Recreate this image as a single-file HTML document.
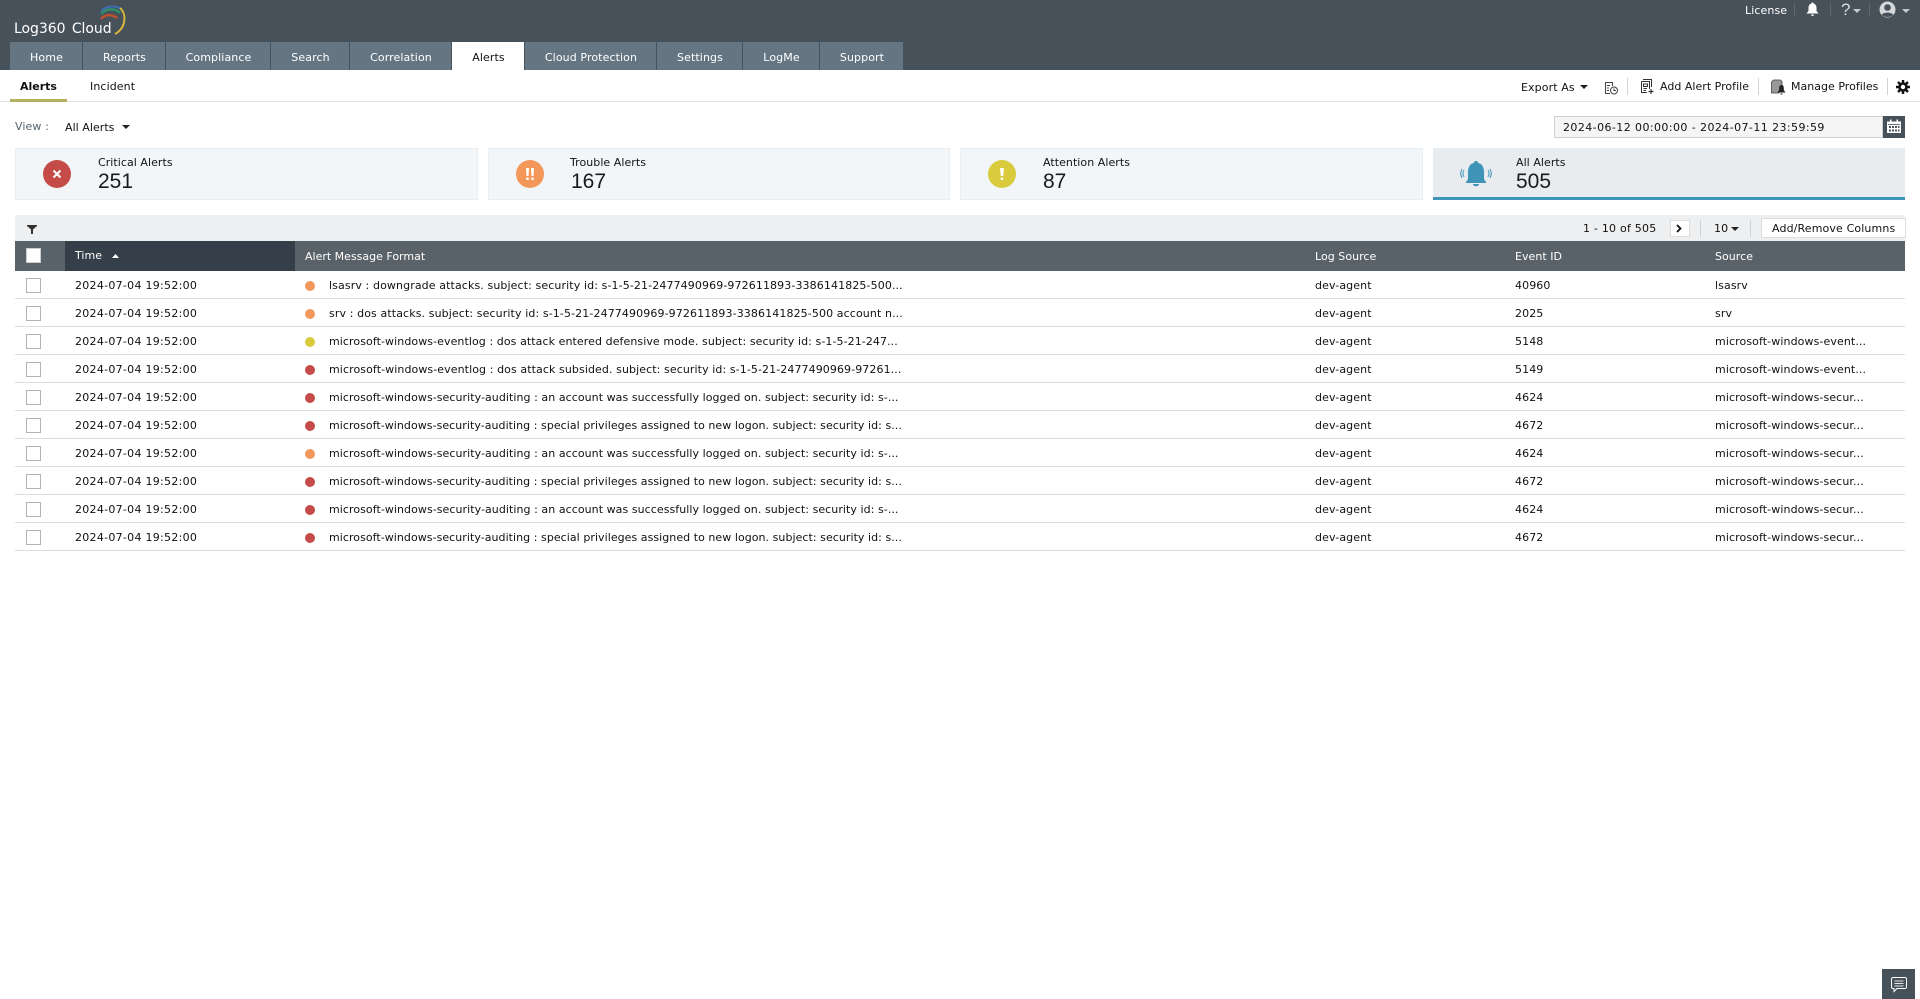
<!DOCTYPE html>
<html><head><meta charset="utf-8"><title>Log360 Cloud</title>
<style>
html,body{margin:0;padding:0;background:#fff}
body{width:1920px;height:999px;position:relative;overflow:hidden;font-family:"DejaVu Sans","Liberation Sans",sans-serif;font-size:11px;color:#111;letter-spacing:.1px}
.a{position:absolute;white-space:nowrap;line-height:16px;margin-top:1px}
.r .a{margin-top:2px}
.b{position:absolute}
.tab{position:absolute;top:42px;height:28px;background:#657582;color:#fff;text-align:center;line-height:32px;font-size:11px;box-sizing:border-box;padding-left:1px}
.card{position:absolute;top:148px;height:52px;background:#f3f6f9;box-sizing:border-box;border:1px solid #ebeef1}
.lbl{position:absolute;top:7px;font-size:11px;line-height:14px;white-space:nowrap;letter-spacing:.05px}
.num{position:absolute;top:21px;font-family:"Liberation Sans",sans-serif;font-size:21px;line-height:24px;letter-spacing:0;color:#1a1a1a}
.ic{position:absolute;top:11px;width:28px;height:28px;border-radius:50%;color:#fff;text-align:center}
.cb{position:absolute;left:26px;width:13px;height:13px;border:1px solid #b3b3b3;background:#fff}
.line{position:absolute;left:15px;width:1890px;height:1px;background:#dcdcdc}
.dot{position:absolute;left:305px;width:10px;height:10px;border-radius:50%}
.sep{position:absolute;width:1px;background:#d2d2d2}
.th{position:absolute;top:249px;color:#fff;line-height:16px;white-space:nowrap;letter-spacing:.04px}
.t{letter-spacing:.28px}
.k{letter-spacing:.06px}
.s{letter-spacing:.05px}
svg{position:absolute;display:block}
</style></head><body>

<div class="b" style="left:0;top:0;width:1920px;height:70px;background:#465159"></div>
<div class="a" style="left:14px;top:19px;font-size:14px;color:#fff;word-spacing:2px;letter-spacing:-.05px;line-height:18px">Log360 Cloud</div>
<svg style="left:98px;top:5px" width="32" height="32" viewBox="0 0 32 32" fill="none">
<path d="M3 6C8 1 18 0 23 4" stroke="#3f6cb0" stroke-width="2"/>
<path d="M3 9C9 3 17 3 22 8" stroke="#2f8f6a" stroke-width="2.5"/>
<path d="M3 14C7 9 14 9 19 13" stroke="#c0502f" stroke-width="2.5"/>
<path d="M22 3C29 9 28 23 17 29" stroke="#d9b83a" stroke-width="2"/>
</svg>

<div class="tab" style="left:10px;width:72px">Home</div>
<div class="tab" style="left:83px;width:82px">Reports</div>
<div class="tab" style="left:166px;width:104px">Compliance</div>
<div class="tab" style="left:271px;width:78px">Search</div>
<div class="tab" style="left:350px;width:101px">Correlation</div>
<div class="tab" style="left:452px;width:72px;background:#fff;color:#111">Alerts</div>
<div class="tab" style="left:525px;width:131px">Cloud Protection</div>
<div class="tab" style="left:657px;width:85px">Settings</div>
<div class="tab" style="left:743px;width:76px">LogMe</div>
<div class="tab" style="left:820px;width:83px">Support</div>

<div class="a" style="left:1745px;top:2px;color:#fff">License</div>
<div class="sep" style="left:1794px;top:3px;height:14px;background:#5d6870"></div>
<svg style="left:1805px;top:2px" width="15" height="15" viewBox="0 0 15 15"><path d="M7.500 0.500C8.300 .5 8.700 1 8.700 1.600C10.800 2.200 11.500 4 11.500 6V9L13.500 11.500H1.500L3.500 9V6C3.500 4 4.200 2.200 6.300 1.600C6.300 1 6.700 .5 7.500 .5ZM6 12.500H9C9 14.500 6 14.500 6 12.500Z" fill="#fff"/></svg>
<div class="sep" style="left:1830px;top:3px;height:14px;background:#5d6870"></div>
<div class="a" style="left:1841px;top:0;color:#d8dcdf;font-family:'Liberation Sans',sans-serif;font-size:17px;line-height:18px">?</div>
<svg style="left:1853px;top:9px" width="8" height="4"><path d="M0 0H8L4 4Z" fill="#c5cacd"/></svg>
<div class="sep" style="left:1869px;top:3px;height:14px;background:#5d6870"></div>
<svg style="left:1879px;top:1px" width="17" height="17" viewBox="0 0 17 17"><circle cx="8.500" cy="8.500" r="8" fill="#d4d8da"/><circle cx="8.500" cy="6.500" r="3.300" fill="#465159"/><path d="M2.800 14C4 10.800 13 10.800 14.200 14C11 16.700 6 16.700 2.800 14Z" fill="#465159"/></svg>
<svg style="left:1902px;top:9px" width="8" height="4"><path d="M0 0H8L4 4Z" fill="#c5cacd"/></svg>

<div class="a" style="left:20px;top:78px;font-weight:bold;color:#111;letter-spacing:0">Alerts</div>
<div class="a" style="left:90px;top:78px">Incident</div>
<div class="b" style="left:0;top:101px;width:1920px;height:1px;background:#e2e2e2"></div>
<div class="b" style="left:10px;top:99px;width:57px;height:3px;background:#b5b061"></div>

<div class="a" style="left:1521px;top:79px">Export As</div>
<svg style="left:1580px;top:85px" width="8" height="4"><path d="M0 0H8L4 4Z" fill="#222"/></svg>
<svg style="left:1604px;top:81px" width="15" height="14" viewBox="0 0 15 14" fill="none" stroke="#444" stroke-width="1"><path d="M6 12.500H1.500V1.500H8.500V5"/><path d="M3 4.500H6M3 7H5M3 9.500H5"/><circle cx="10" cy="9.500" r="3.500"/><path d="M10 7.500V9.500H12"/></svg>
<div class="sep" style="left:1627px;top:78px;height:17px"></div>
<svg style="left:1640px;top:79px" width="15" height="15" viewBox="0 0 15 15" fill="none" stroke="#333" stroke-width="1"><path d="M3.500 1V.5H11.500V8"/><path d="M1.500 2.500H9.500V10M7 13.500H1.500V2.500"/><path d="M3.500 5H7.500V7.500H3.500ZM3.500 9.500H7M3.500 11.500H6"/><path d="M11 10V15M8.500 12.500H13.500" stroke-width="1.200"/></svg>
<div class="a" style="left:1660px;top:78px;letter-spacing:.02px">Add Alert Profile</div>
<div class="sep" style="left:1758px;top:78px;height:17px"></div>
<svg style="left:1771px;top:79px" width="15" height="16" viewBox="0 0 15 16"><path d="M2.500 1H9.500L11 2.500V7L8 12V14H.5V3Z" fill="#999" stroke="#444" stroke-width=".8"/><path d="M10.500 6C12.300 6 12.800 7.500 12.800 9V11L14.500 13.500H6.500L8.200 11V9C8.200 7.500 8.700 6 10.500 6ZM9.300 14.500H11.700C11.700 16 9.300 16 9.300 14.500Z" fill="#222"/></svg>
<div class="a" style="left:1791px;top:78px;letter-spacing:.02px">Manage Profiles</div>
<div class="sep" style="left:1887px;top:78px;height:17px"></div>
<svg style="left:1896px;top:80px" width="14" height="14" viewBox="0 0 14 14"><circle cx="7" cy="7" r="3.500" fill="none" stroke="#111" stroke-width="2.600"/><g stroke="#111" stroke-width="2.400"><path d="M7 0V3M7 11V14M0 7H3M11 7H14M2 2L4 4M10 10L12 12M12 2L10 4M4 10L2 12"/></g></svg>

<div class="a" style="left:15px;top:118px;color:#56666f">View :</div>
<div class="a" style="left:65px;top:119px;letter-spacing:.04px">All Alerts</div>
<svg style="left:122px;top:125px" width="8" height="4"><path d="M0 0H8L4 4Z" fill="#222"/></svg>

<div class="b" style="left:1554px;top:116px;width:329px;height:22px;box-sizing:border-box;background:#f5f5f5;border:1px solid #d0d0d0"></div>
<div class="a" style="left:1563px;top:119px;letter-spacing:.42px">2024-06-12 00:00:00 - 2024-07-11 23:59:59</div>
<div class="b" style="left:1883px;top:116px;width:22px;height:22px;background:#465159"></div>
<svg style="left:1887px;top:119px" width="14" height="15" viewBox="0 0 14 15"><path d="M0 2.500H14V14H0Z" fill="#fff"/><path d="M3 .5H4.500V3.500H3ZM9.500 .5H11V3.500H9.500Z" fill="#fff"/><path d="M1 5H13V5.800H1Z" fill="#465159"/><g fill="#465159"><rect x="2" y="7" width="2" height="2"/><rect x="5" y="7" width="2" height="2"/><rect x="8" y="7" width="2" height="2"/><rect x="11" y="7" width="1.500" height="2"/><rect x="2" y="10.500" width="2" height="2"/><rect x="5" y="10.500" width="2" height="2"/><rect x="8" y="10.500" width="2" height="2"/><rect x="11" y="10.500" width="1.500" height="2"/></g></svg>

<div class="card" style="left:15px;width:463px">
 <div class="ic" style="left:27px;background:#c44b47"><svg style="left:8px;top:8px" width="12" height="12"><path d="M2.500 2.500L9.500 9.500M9.500 2.500L2.500 9.500" stroke="#fff" stroke-width="2"/></svg></div>
 <div class="lbl" style="left:82px">Critical Alerts</div><div class="num" style="left:82px">251</div>
</div>
<div class="card" style="left:488px;width:462px">
 <div class="ic" style="left:27px;background:#f3985a"><svg style="left:8px;top:7px" width="12" height="14"><path d="M2 1H5L4.500 9H2.500ZM7 1H10L9.500 9H7.500ZM2.300 10.500H4.700V13H2.300ZM7.300 10.500H9.700V13H7.300Z" fill="#fff"/></svg></div>
 <div class="lbl" style="left:81px">Trouble Alerts</div><div class="num" style="left:82px">167</div>
</div>
<div class="card" style="left:960px;width:463px">
 <div class="ic" style="left:27px;background:#d9cb3c"><svg style="left:10px;top:7px" width="8" height="14"><path d="M2 1H6L5.200 9H2.800ZM2.800 10.500H5.200V13H2.800Z" fill="#fff"/></svg></div>
 <div class="lbl" style="left:82px">Attention Alerts</div><div class="num" style="left:82px">87</div>
</div>
<div class="b" style="left:1433px;top:148px;width:472px;height:52px;background:#e9ecee;border-bottom:0"></div>
<div class="b" style="left:1433px;top:197px;width:472px;height:3px;background:#3f95b7"></div>
<svg style="left:1460px;top:159px" width="32" height="30" viewBox="0 0 32 30"><path d="M16 2C17.500 2 18 3 18 3.800C22.500 5 24 9 24 13V20L26.500 24H5.500L8 20V13C8 9 9.500 5 14 3.800C14 3 14.500 2 16 2ZM13 25H19C19 28 13 28 13 25Z" fill="#3f95b7"/><path d="M4 11C2.500 13 2.500 16 4 18M2 10C.2 13 .2 16 2 19M28 11C29.500 13 29.500 16 28 18M30 10C31.800 13 31.800 16 30 19" stroke="#3f95b7" fill="none"/></svg>
<div class="lbl" style="left:1516px;top:156px">All Alerts</div><div class="num" style="left:1516px;top:170px">505</div>

<div class="b" style="left:15px;top:215px;width:1890px;height:26px;background:#eeeff0"></div>
<svg style="left:27px;top:225px" width="10" height="9"><path d="M0 0H10V1L6 4.500V9H4V4.500L0 1Z" fill="#333"/></svg>
<div class="a" style="left:1583px;top:220px;letter-spacing:.22px">1 - 10 of 505</div>
<div class="b" style="left:1670px;top:220px;width:18px;height:15px;background:#fff;border:1px solid #ddd"></div>
<svg style="left:1676px;top:224px" width="6" height="9"><path d="M1 1L4.500 4.500L1 8" fill="none" stroke="#111" stroke-width="1.800"/></svg>
<div class="sep" style="left:1700px;top:220px;height:17px"></div>
<div class="a" style="left:1714px;top:220px">10</div>
<svg style="left:1731px;top:227px" width="8" height="4"><path d="M0 0H8L4 4Z" fill="#222"/></svg>
<div class="sep" style="left:1750px;top:220px;height:17px"></div>
<div class="b" style="left:1761px;top:218px;width:143px;height:18px;background:#fff;border:1px solid #ddd"></div>
<div class="a" style="left:1772px;top:220px;letter-spacing:.13px">Add/Remove Columns</div>

<div class="b" style="left:15px;top:241px;width:1890px;height:30px;background:#596268"></div>
<div class="b" style="left:65px;top:241px;width:230px;height:30px;background:#353f49"></div>
<div class="b" style="left:26px;top:248px;width:13px;height:13px;background:#fff;border:1px solid #ccc"></div>
<div class="th" style="left:75px;top:248px">Time</div>
<svg style="left:112px;top:254px" width="7" height="4"><path d="M0 4H7L3.500 0Z" fill="#fff"/></svg>
<div class="th" style="left:305px;letter-spacing:0">Alert Message Format</div>
<div class="th" style="left:1315px">Log Source</div>
<div class="th" style="left:1515px">Event ID</div>
<div class="th" style="left:1715px">Source</div>

<div class="r">
<div class="cb" style="top:278px"></div><div class="a t" style="left:75px;top:276px">2024-07-04 19:52:00</div><div class="dot" style="top:281px;background:#f3985a"></div><div class="a" style="left:329px;top:276px;letter-spacing:.11px">lsasrv : downgrade attacks. subject: security id: s-1-5-21-2477490969-972611893-3386141825-500...</div><div class="a" style="left:1315px;top:276px">dev-agent</div><div class="a" style="left:1515px;top:276px">40960</div><div class="a" style="left:1715px;top:276px">lsasrv</div><div class="line" style="top:298px"></div>
<div class="cb" style="top:306px"></div><div class="a t" style="left:75px;top:304px">2024-07-04 19:52:00</div><div class="dot" style="top:309px;background:#f3985a"></div><div class="a" style="left:329px;top:304px;letter-spacing:.11px">srv : dos attacks. subject: security id: s-1-5-21-2477490969-972611893-3386141825-500 account n...</div><div class="a" style="left:1315px;top:304px">dev-agent</div><div class="a" style="left:1515px;top:304px">2025</div><div class="a" style="left:1715px;top:304px">srv</div><div class="line" style="top:326px"></div>
<div class="cb" style="top:334px"></div><div class="a t" style="left:75px;top:332px">2024-07-04 19:52:00</div><div class="dot" style="top:337px;background:#d9cb3c"></div><div class="a" style="left:329px;top:332px;letter-spacing:.08px">microsoft-windows-eventlog : dos attack entered defensive mode. subject: security id: s-1-5-21-247...</div><div class="a" style="left:1315px;top:332px">dev-agent</div><div class="a" style="left:1515px;top:332px">5148</div><div class="a" style="left:1715px;top:332px">microsoft-windows-event...</div><div class="line" style="top:354px"></div>
<div class="cb" style="top:362px"></div><div class="a t" style="left:75px;top:360px">2024-07-04 19:52:00</div><div class="dot" style="top:365px;background:#c44b47"></div><div class="a" style="left:329px;top:360px;letter-spacing:.09px">microsoft-windows-eventlog : dos attack subsided. subject: security id: s-1-5-21-2477490969-97261...</div><div class="a" style="left:1315px;top:360px">dev-agent</div><div class="a" style="left:1515px;top:360px">5149</div><div class="a" style="left:1715px;top:360px">microsoft-windows-event...</div><div class="line" style="top:382px"></div>
<div class="cb" style="top:390px"></div><div class="a t" style="left:75px;top:388px">2024-07-04 19:52:00</div><div class="dot" style="top:393px;background:#c44b47"></div><div class="a k" style="left:329px;top:388px">microsoft-windows-security-auditing : an account was successfully logged on. subject: security id: s-...</div><div class="a" style="left:1315px;top:388px">dev-agent</div><div class="a" style="left:1515px;top:388px">4624</div><div class="a" style="left:1715px;top:388px">microsoft-windows-secur...</div><div class="line" style="top:410px"></div>
<div class="cb" style="top:418px"></div><div class="a t" style="left:75px;top:416px">2024-07-04 19:52:00</div><div class="dot" style="top:421px;background:#c44b47"></div><div class="a s" style="left:329px;top:416px">microsoft-windows-security-auditing : special privileges assigned to new logon. subject: security id: s...</div><div class="a" style="left:1315px;top:416px">dev-agent</div><div class="a" style="left:1515px;top:416px">4672</div><div class="a" style="left:1715px;top:416px">microsoft-windows-secur...</div><div class="line" style="top:438px"></div>
<div class="cb" style="top:446px"></div><div class="a t" style="left:75px;top:444px">2024-07-04 19:52:00</div><div class="dot" style="top:449px;background:#f3985a"></div><div class="a k" style="left:329px;top:444px">microsoft-windows-security-auditing : an account was successfully logged on. subject: security id: s-...</div><div class="a" style="left:1315px;top:444px">dev-agent</div><div class="a" style="left:1515px;top:444px">4624</div><div class="a" style="left:1715px;top:444px">microsoft-windows-secur...</div><div class="line" style="top:466px"></div>
<div class="cb" style="top:474px"></div><div class="a t" style="left:75px;top:472px">2024-07-04 19:52:00</div><div class="dot" style="top:477px;background:#c44b47"></div><div class="a s" style="left:329px;top:472px">microsoft-windows-security-auditing : special privileges assigned to new logon. subject: security id: s...</div><div class="a" style="left:1315px;top:472px">dev-agent</div><div class="a" style="left:1515px;top:472px">4672</div><div class="a" style="left:1715px;top:472px">microsoft-windows-secur...</div><div class="line" style="top:494px"></div>
<div class="cb" style="top:502px"></div><div class="a t" style="left:75px;top:500px">2024-07-04 19:52:00</div><div class="dot" style="top:505px;background:#c44b47"></div><div class="a k" style="left:329px;top:500px">microsoft-windows-security-auditing : an account was successfully logged on. subject: security id: s-...</div><div class="a" style="left:1315px;top:500px">dev-agent</div><div class="a" style="left:1515px;top:500px">4624</div><div class="a" style="left:1715px;top:500px">microsoft-windows-secur...</div><div class="line" style="top:522px"></div>
<div class="cb" style="top:530px"></div><div class="a t" style="left:75px;top:528px">2024-07-04 19:52:00</div><div class="dot" style="top:533px;background:#c44b47"></div><div class="a s" style="left:329px;top:528px">microsoft-windows-security-auditing : special privileges assigned to new logon. subject: security id: s...</div><div class="a" style="left:1315px;top:528px">dev-agent</div><div class="a" style="left:1515px;top:528px">4672</div><div class="a" style="left:1715px;top:528px">microsoft-windows-secur...</div><div class="line" style="top:550px"></div>
</div>

<div class="b" style="left:1882px;top:969px;width:33px;height:30px;background:#465159"></div>
<svg style="left:1891px;top:977px" width="16" height="16" viewBox="0 0 16 16" fill="none" stroke="#fff" stroke-width="1"><path d="M2 .5H14A1.500 1.500 0 0 1 15.500 2V10A1.500 1.500 0 0 1 14 11.500H6L3 14.500V11.500H2A1.500 1.500 0 0 1 .5 10V2A1.500 1.500 0 0 1 2 .5Z"/><path d="M3.500 4H12.500M3.500 6.500H12.500M3.500 9H12.500" stroke-opacity=".85"/></svg>
</body></html>
